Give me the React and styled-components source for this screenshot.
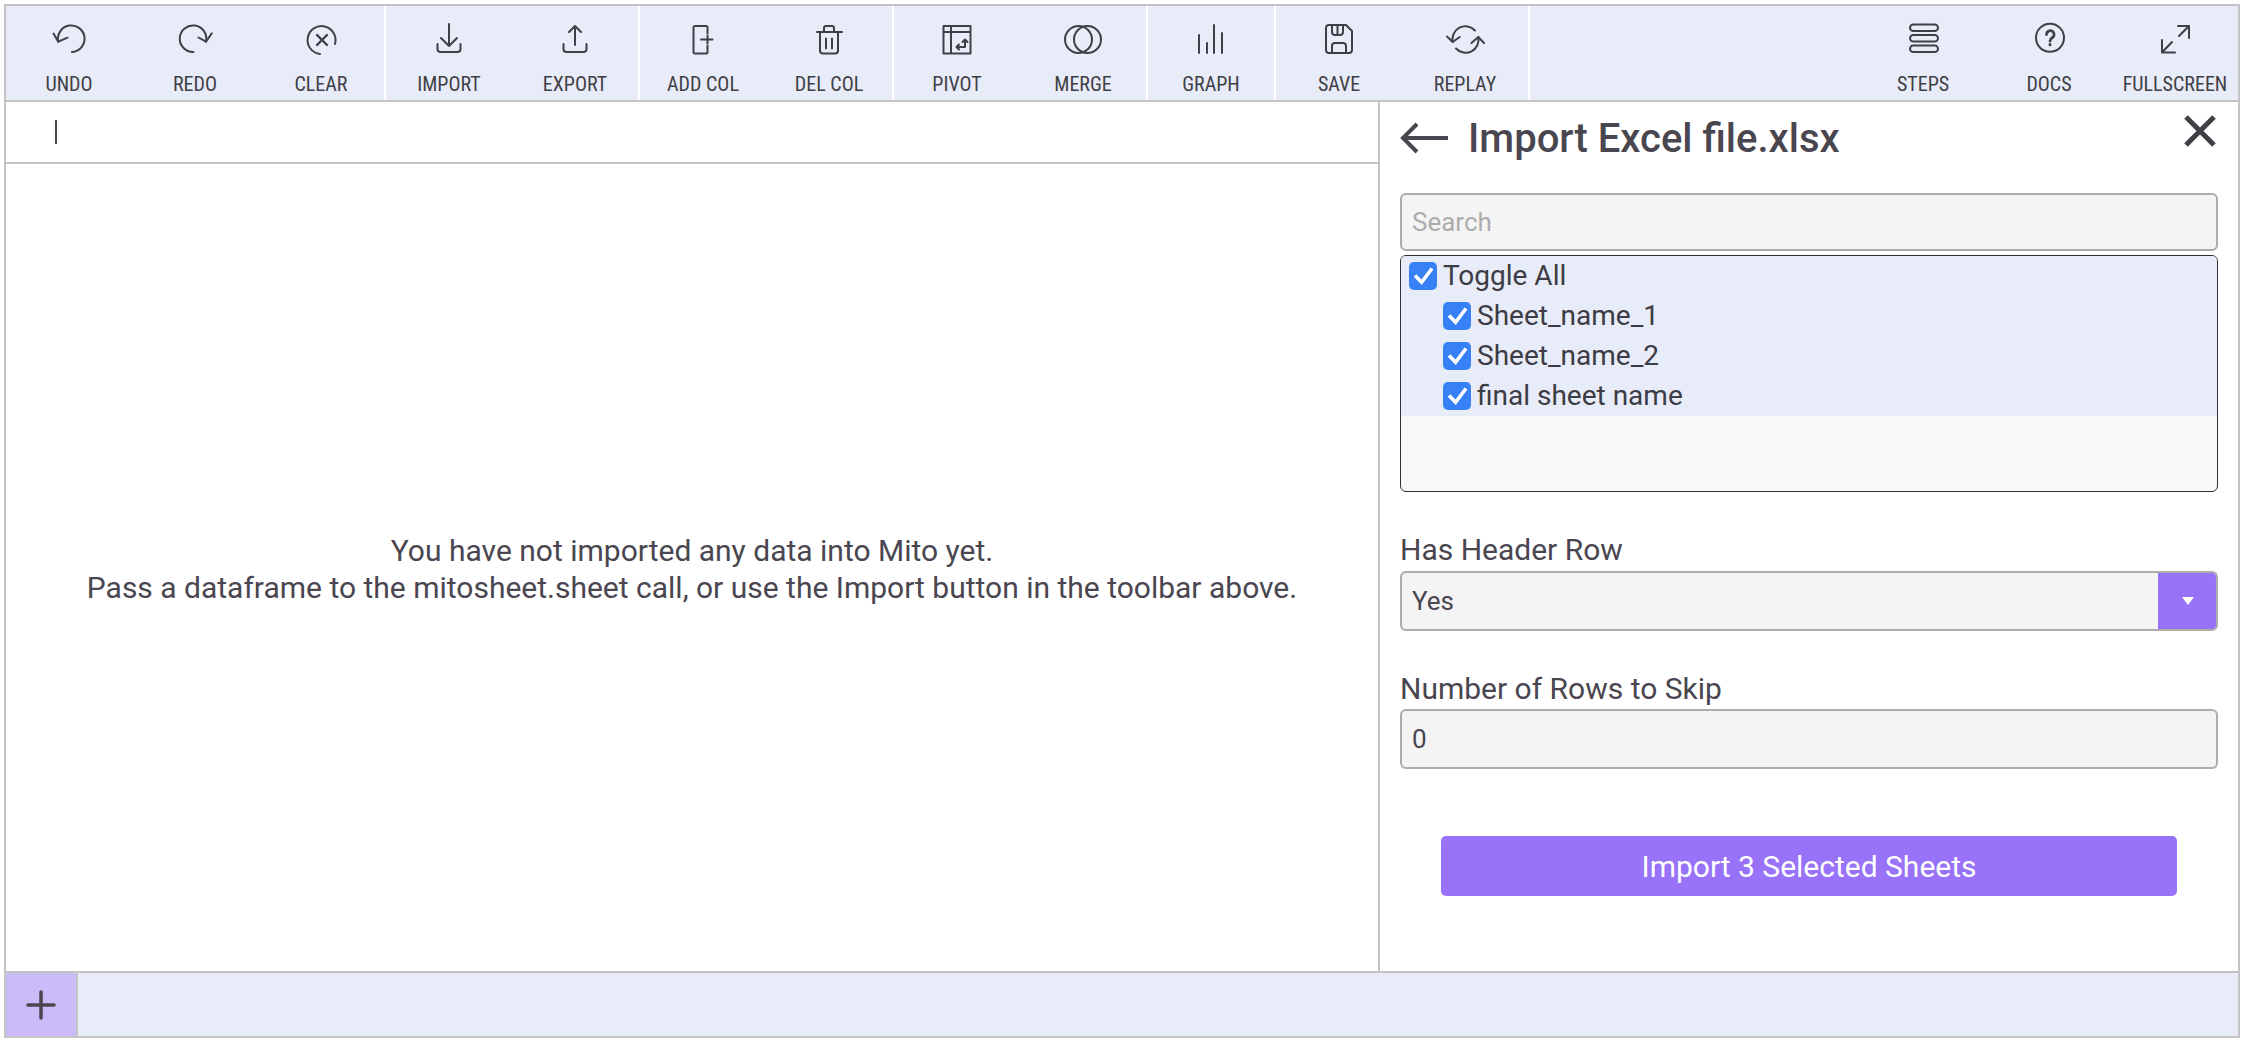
import React from 'react'
import styled, { createGlobalStyle } from 'styled-components'

const GlobalStyle = createGlobalStyle`
    html, body {
        margin: 0;
        padding: 0;
        background: #fff;
    }
    body {
        font-family: 'Roboto', sans-serif;
        color: #494650;
    }
`

const Frame = styled.div`
    box-sizing: border-box;
    width: 2236px;
    height: 1034px;
    margin: 4px 0 0 4px;
    border: 2px solid #c4c4c4;
    display: flex;
    flex-direction: column;
`

const Toolbar = styled.div`
    height: 94px;
    flex: none;
    display: flex;
    justify-content: space-between;
    background: #e8ebf8;
    border-bottom: 2px solid #c4c4c4;
`

const ToolGroups = styled.div`
    display: flex;
`

const ToolGroup = styled.div`
    display: flex;
    border-right: 2px solid #fff;
`

const ToolButton = styled.div`
    width: 126px;
    display: flex;
    flex-direction: column;
    align-items: center;
`

const ToolIcon = styled.svg`
    width: 40px;
    height: 40px;
    margin-top: 12px;
    flex: none;
    fill: none;
    stroke: #3f3f46;
    stroke-width: 2;
    stroke-linecap: round;
    stroke-linejoin: round;
`

const ToolLabel = styled.span`
    margin-top: 15px;
    font-size: 20px;
    line-height: 22px;
    font-stretch: 75%;
    white-space: nowrap;
    color: #3f3f46;
`

const Body = styled.div`
    flex: 1;
    min-height: 0;
    display: flex;
`

const SheetPane = styled.div`
    flex: 1;
    display: flex;
    flex-direction: column;
`

const FormulaBar = styled.div`
    height: 60px;
    flex: none;
    display: flex;
    align-items: center;
    padding-left: 49px;
    border-bottom: 2px solid #c4c4c4;
`

const Caret = styled.div`
    width: 2px;
    height: 24px;
    background: #494650;
`

const EmptyMessage = styled.div`
    flex: 1;
    display: flex;
    flex-direction: column;
    justify-content: center;
    align-items: center;
    font-size: 30px;
    line-height: 37px;
    padding-top: 3px;
`

const Taskpane = styled.div`
    box-sizing: border-box;
    width: 860px;
    flex: none;
    padding: 0 20px 0 20px;
    border-left: 2px solid #c4c4c4;
    position: relative;
`

const PaneHeader = styled.div`
    height: 72px;
    display: flex;
    align-items: center;
    gap: 18px;
`

const PaneTitle = styled.h1`
    margin: 2px 0 0;
    font-size: 40px;
    font-weight: 500;
    line-height: 50px;
`

const CloseButton = styled.svg`
    position: absolute;
    top: 12px;
    right: 21px;
    width: 34px;
    height: 34px;
    stroke: #3f3f46;
    stroke-width: 5;
`

const TextBox = styled.div`
    box-sizing: border-box;
    height: 60px;
    display: flex;
    align-items: center;
    padding: 0 10px;
    background: #f4f4f4;
    border: 2px solid #acacac;
    border-radius: 6px;
    font-size: 26px;
    color: ${props => props.$placeholder ? '#acacac' : '#494650'};
`

const SearchBox = styled(TextBox)`
    height: 58px;
    margin-top: 19px;
`

const SheetList = styled.div`
    box-sizing: border-box;
    height: 237px;
    margin-top: 4px;
    background: #f8f8f8;
    border: 1.5px solid #2f2f35;
    border-radius: 6px;
    overflow: hidden;
`

const SheetRow = styled.div`
    height: 40px;
    display: flex;
    align-items: center;
    gap: 6px;
    padding-left: ${props => props.$nested ? '42px' : '8px'};
    background: #e8ebf8;
    font-size: 28px;
    line-height: 36px;
    color: #3c3c44;
`

const CheckBox = styled.span`
    width: 28px;
    height: 28px;
    flex: none;
    display: flex;
    background: #3880f6;
    border-radius: 5px;
`

const Field = styled.div`
    margin-top: ${props => props.$top}px;
`

const FieldLabel = styled.div`
    font-size: 30px;
    line-height: 36px;
    margin-bottom: ${props => props.$gap}px;
`

const SelectBox = styled(TextBox)`
    position: relative;
    overflow: hidden;
`

const SelectArrow = styled.span`
    position: absolute;
    top: -2px;
    right: -2px;
    bottom: -2px;
    width: 60px;
    display: flex;
    align-items: center;
    justify-content: center;
    background: #9872f8;

    &::after {
        content: '';
        border-left: 6px solid transparent;
        border-right: 6px solid transparent;
        border-top: 8px solid #fff;
    }
`

const ButtonRow = styled.div`
    display: flex;
    justify-content: center;
    margin-top: 67px;
`

const ImportButton = styled.div`
    width: 736px;
    height: 60px;
    display: flex;
    align-items: center;
    justify-content: center;
    background: #9872f8;
    border-radius: 5px;
    color: #fff;
    font-size: 30px;
`

const Footer = styled.div`
    height: 63px;
    flex: none;
    display: flex;
    background: #e8ebf8;
    border-top: 2px solid #c4c4c4;
`

const AddTab = styled.div`
    width: 70px;
    display: flex;
    align-items: center;
    justify-content: center;
    background: #cbbbf8;
    border-right: 2px solid #c4c4c4;
`

const PlusIcon = styled.svg`
    width: 30px;
    height: 30px;
    stroke: #494650;
    stroke-width: 3.5;
    stroke-linecap: round;
`

const Check = () => (
    <svg width="28" height="28" viewBox="0 0 28 28" fill="none" stroke="#fff" strokeWidth="3.6">
        <path d="M6 13.500l6.600 6.800L23 6.500" />
    </svg>
)

const icons = {
    undo: <><path d="M9.300 23.700A13.300 13.300 0 1 1 23 34" /><path d="M4.500 15.500l4.800 8.200 9.200-4" /></>,
    redo: <><path d="M31 23.700A13.300 13.300 0 1 0 18.500 34" /><path d="M23.500 19.500l7.500 4.200 5.800-8.400" /></>,
    clear: <><path d="M34 26A14 14 0 1 0 19 36" /><path d="M16 17l10 10M26 17L16 27" strokeWidth="2.400" /></>,
    import: <><path d="M20 6v22M12 20l8 8 8-8" /><path d="M8.500 26v5a3 3 0 0 0 3 3h17a3 3 0 0 0 3-3v-5" /></>,
    export: <><path d="M20 27V8M14 14l6-6 6 6" /><path d="M8.500 26v5a3 3 0 0 0 3 3h17a3 3 0 0 0 3-3v-5" /></>,
    addCol: <><path d="M24.500 15.500V9.500A1.500 1.500 0 0 0 23 8H12a1.500 1.500 0 0 0-1.500 1.500v24.500A1.500 1.500 0 0 0 12 35.500h11a1.500 1.500 0 0 0 1.500-1.500v-6.500" /><path d="M18 21.500h11.500M24.500 17.500v8" /></>,
    delCol: <><path d="M8 14h25M15 13.500V10a2 2 0 0 1 2-2h6a2 2 0 0 1 2 2v3.500" /><path d="M11 14v18.500a3 3 0 0 0 3 3h12a3 3 0 0 0 3-3V14M17 20.500v10M23 20.500v10" /></>,
    pivot: <><path d="M6.500 8h27v27.500h-27zM6.500 14h27M14 8v27.500" /><path d="M28 22v7h-8M25.500 24L28 21.500l2.500 2.500M22 26.500L19.500 29l2.500 2.500" /></>,
    merge: <><circle cx="15.500" cy="21.500" r="13.500" /><circle cx="24.500" cy="21.500" r="13.500" /></>,
    graph: <path d="M8 17v18M16 25v10M23 7v28M31 15v20" />,
    save: <><path d="M7 10a3 3 0 0 1 3-3h17l6 6v19a3 3 0 0 1-3 3H10a3 3 0 0 1-3-3z" /><path d="M13 7.500V14a3 3 0 0 0 3 3h5a3 3 0 0 0 3-3V7.500M18.500 8v8M13 35V28a3 3 0 0 1 3-3h8a3 3 0 0 1 3 3v7" /></>,
    replay: <><path d="M7.700 24A13 13 0 0 1 30 12.500M33.300 19A13 13 0 0 1 11 30.500" /><path d="M2 18.500l5.700 5.500 7-5M26.500 25l6.800-6 5.700 6" /></>,
    steps: <><rect x="7" y="6.500" width="28" height="6.500" rx="3.250" /><rect x="7" y="17" width="28" height="6.500" rx="3.250" /><rect x="7" y="27.500" width="28" height="6.500" rx="3.250" /></>,
    docs: <><circle cx="21" cy="19.800" r="14" /><path d="M17.500 16.500a3.800 3.800 0 1 1 6 3c-1.500 1-2.500 1.800-2.500 3.500M21 26.500v.4" strokeWidth="2.800" /></>,
    fullscreen: <path d="M24 18L34 8M23 8h11v12M17 24L7 34.500M7 22v12.500h13" />,
}

const leftGroups = [
    [['UNDO', 'undo'], ['REDO', 'redo'], ['CLEAR', 'clear']],
    [['IMPORT', 'import'], ['EXPORT', 'export']],
    [['ADD COL', 'addCol'], ['DEL COL', 'delCol']],
    [['PIVOT', 'pivot'], ['MERGE', 'merge']],
    [['GRAPH', 'graph']],
    [['SAVE', 'save'], ['REPLAY', 'replay']],
]

const rightTools = [['STEPS', 'steps'], ['DOCS', 'docs'], ['FULLSCREEN', 'fullscreen']]

const Tool = ({ label, icon }) => (
    <ToolButton>
        <ToolIcon viewBox="0 0 40 40">{icons[icon]}</ToolIcon>
        <ToolLabel>{label}</ToolLabel>
    </ToolButton>
)

const sheets = ['Sheet_name_1', 'Sheet_name_2', 'final sheet name']

const App = () => (
    <>
        <GlobalStyle />
        <Frame>
            <Toolbar>
                <ToolGroups>
                    {leftGroups.map((group, id) => (
                        <ToolGroup key={id}>
                            {group.map(([label, icon]) => <Tool key={label} label={label} icon={icon} />)}
                        </ToolGroup>
                    ))}
                </ToolGroups>
                <ToolGroups>
                    {rightTools.map(([label, icon]) => <Tool key={label} label={label} icon={icon} />)}
                </ToolGroups>
            </Toolbar>
            <Body>
                <SheetPane>
                    <FormulaBar><Caret /></FormulaBar>
                    <EmptyMessage>
                        <div>You have not imported any data into Mito yet.</div>
                        <div>Pass a dataframe to the mitosheet.sheet call, or use the Import button in the toolbar above.</div>
                    </EmptyMessage>
                </SheetPane>
                <Taskpane>
                    <PaneHeader>
                        <svg width="50" height="32" viewBox="0 0 50 32" fill="none" stroke="#494650" strokeWidth="4">
                            <path d="M48 16H3M17 2L3 16l14 14" />
                        </svg>
                        <PaneTitle>Import Excel file.xlsx</PaneTitle>
                    </PaneHeader>
                    <CloseButton viewBox="0 0 34 34"><path d="M3 3l28 28M31 3L3 31" /></CloseButton>
                    <SearchBox $placeholder>Search</SearchBox>
                    <SheetList>
                        <SheetRow><CheckBox><Check /></CheckBox>Toggle All</SheetRow>
                        {sheets.map(sheet => (
                            <SheetRow key={sheet} $nested><CheckBox><Check /></CheckBox>{sheet}</SheetRow>
                        ))}
                    </SheetList>
                    <Field $top={40}>
                        <FieldLabel $gap={3}>Has Header Row</FieldLabel>
                        <SelectBox>Yes<SelectArrow /></SelectBox>
                    </Field>
                    <Field $top={40}>
                        <FieldLabel $gap={2}>Number of Rows to Skip</FieldLabel>
                        <TextBox>0</TextBox>
                    </Field>
                    <ButtonRow><ImportButton>Import 3 Selected Sheets</ImportButton></ButtonRow>
                </Taskpane>
            </Body>
            <Footer>
                <AddTab>
                    <PlusIcon viewBox="0 0 30 30"><path d="M2 15h26M15 2v26" /></PlusIcon>
                </AddTab>
            </Footer>
        </Frame>
    </>
)

export default App
